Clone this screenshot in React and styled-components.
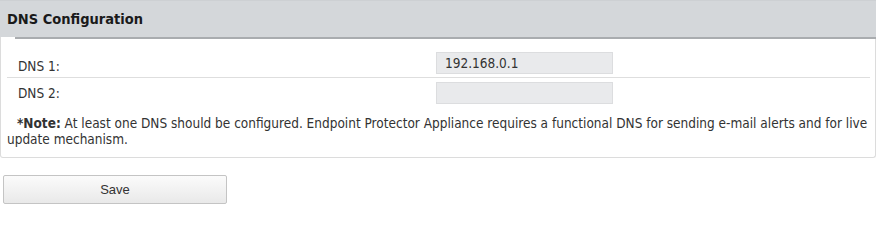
import React from 'react';
import styled, { createGlobalStyle } from 'styled-components';

const GlobalStyle = createGlobalStyle`
  html, body {
    margin: 0;
    padding: 0;
    background: #ffffff;
  }
  body {
    font-family: "DejaVu Sans Condensed", "DejaVu Sans", sans-serif;
    color: #333333;
  }
`;

const dnsServers = [
  { label: 'DNS 1:', value: '192.168.0.1' },
  { label: 'DNS 2:', value: '' },
];

export default function App() {
  return (
    <>
      <GlobalStyle />
      <Page>
        <Panel>
          <PanelHeader>
            <HeaderTitle>DNS Configuration</HeaderTitle>
          </PanelHeader>
          <PanelBody>
            <FieldList>
              {dnsServers.map((dns, i) => (
                <FieldRow key={dns.label} $first={i === 0}>
                  <FieldLabel $first={i === 0}>{dns.label}</FieldLabel>
                  <FieldInput type="text" defaultValue={dns.value} />
                </FieldRow>
              ))}
            </FieldList>
            <Note>
              <strong>*Note:</strong> At least one DNS should be configured.
              Endpoint Protector Appliance requires a functional DNS for sending
              e-mail alerts and for live update mechanism.
            </Note>
          </PanelBody>
        </Panel>
        <Actions>
          <SaveButton type="button">Save</SaveButton>
        </Actions>
      </Page>
    </>
  );
}

const Page = styled.div`
  width: 877px;
`;

const Panel = styled.section`
  width: 876px;
  box-sizing: border-box;
  border: 1px solid #dcdcdc;
  border-top: none;
  border-radius: 0 0 3px 3px;
  background: #ffffff;
`;

const PanelHeader = styled.div`
  position: relative;
  height: 37px;
  margin: 0 -1px;
  display: flex;
  align-items: center;
  padding-left: 7px;
  background: #d4d7da;
  border-top: 1px solid #cdd0d3;
  box-sizing: border-box;

  &::after {
    content: '';
    position: absolute;
    left: 15px;
    right: 0;
    bottom: -2px;
    height: 2px;
    background: #a9acaf;
  }
`;

const HeaderTitle = styled.h2`
  margin: 0;
  font-size: 14.5px;
  font-weight: bold;
  color: #1a1a1a;
`;

const PanelBody = styled.div`
  padding: 0 0 10px 0;
`;

const FieldList = styled.div`
  display: flex;
  flex-direction: column;
  margin: 0 5px 0 6px;
`;

const FieldRow = styled.div`
  display: grid;
  grid-template-columns: 429px 177px;
  align-items: start;
  padding: ${({ $first }) => ($first ? '15px 0 3px 0' : '4px 0 0 0')};
  border-bottom: ${({ $first }) => ($first ? '1px solid #dedede' : 'none')};
`;

const FieldLabel = styled.span`
  margin-top: ${({ $first }) => ($first ? '6px' : '3px')};
  padding-left: 11px;
  font-size: 13.5px;
  line-height: 16px;
  color: #333333;
`;

const FieldInput = styled.input`
  height: 22px;
  box-sizing: border-box;
  border: 1px solid #dcdddf;
  background: #e9eaec;
  padding: 0 8px;
  font-family: "DejaVu Sans Condensed", "DejaVu Sans", sans-serif;
  font-size: 13.5px;
  color: #333333;
  outline: none;
`;

const Note = styled.p`
  margin: 11px 0 0 0;
  padding: 0 1px 0 6px;
  font-size: 13.5px;
  line-height: 16px;
  color: #333333;
  text-indent: 10px;

  strong {
    font-weight: bold;
  }
`;

const Actions = styled.div`
  padding: 17px 0 0 3px;
`;

const SaveButton = styled.button`
  display: block;
  width: 224px;
  height: 29px;
  border: 1px solid #c4c4c4;
  border-radius: 2px;
  background: linear-gradient(#fbfbfb, #e9e9e9);
  font-family: "Liberation Sans", Arial, sans-serif;
  font-size: 13px;
  color: #333333;
  cursor: pointer;
`;
